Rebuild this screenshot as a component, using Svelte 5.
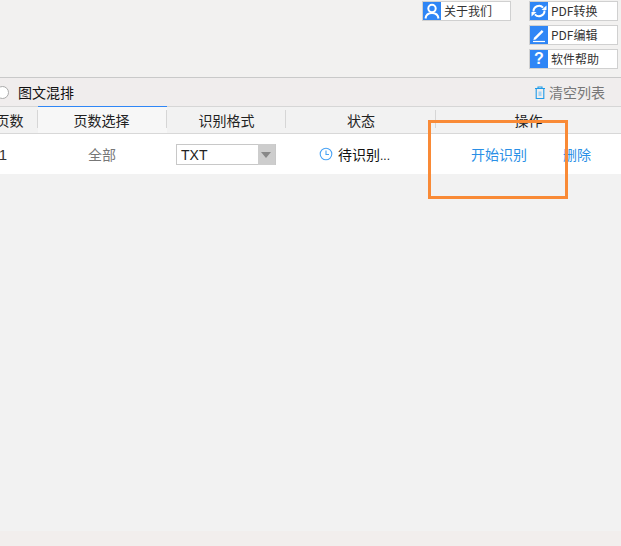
<script lang="ts">
  const sideLinks = ['PDF转换', 'PDF编辑', '软件帮助'];
</script>

<div class="page">
  <header class="top">
    <button class="tool">
      <span class="tool-icon">
        <svg viewBox="0 0 18 18" width="18" height="18" fill="none" stroke="#fff" stroke-width="2">
          <circle cx="9" cy="6.500" r="3.700" />
          <path d="M2.500 16.500c.5-3.800 3-5.500 6.500-5.500s6 1.700 6.500 5.500" />
        </svg>
      </span>
      <span>关于我们</span>
    </button>
    <div class="tool-col">
      {#each sideLinks as label, i}
        <button class="tool">
          <span class="tool-icon">
            {#if i === 0}
              <svg viewBox="0 0 18 18" width="18" height="18" fill="none" stroke="#fff" stroke-width="2">
                <path d="M3.500 9.500a5.500 5.500 0 0 1 9.600-3.800" />
                <path d="M14.500 8.500a5.500 5.500 0 0 1-9.600 3.800" />
                <path d="M11.500 8h5V3.500z" fill="#fff" stroke="none" />
                <path d="M6.500 10h-5v4.500z" fill="#fff" stroke="none" />
              </svg>
            {:else if i === 1}
              <svg viewBox="0 0 18 18" width="18" height="18" fill="none" stroke="#fff">
                <path d="M4 11.800l7.800-7.800 1.700 1.700-7.800 7.800-2.300.6z" fill="#fff" stroke="none" />
                <path d="M3 15.500h12" stroke-width="1.200" />
              </svg>
            {:else}
              <span class="help">?</span>
            {/if}
          </span>
          <span>{label}</span>
        </button>
      {/each}
    </div>
  </header>

  <div class="toolbar">
    <label class="mix">
      <span class="radio"></span>
      <span>图文混排</span>
    </label>
    <button class="clear">
      <svg viewBox="0 0 10 13" width="10" height="13" fill="none" stroke="#1f9be8" stroke-width="1.100">
        <path d="M0 2.500h10M3 2.500V1h4v1.500" />
        <path d="M1.200 2.500v10h7.600v-10" />
        <path d="M3.500 5.500h3v4.500h-3z" fill="#9fd3f5" stroke="none" />
      </svg>
      <span>清空列表</span>
    </button>
  </div>

  <div class="table-head">
    <div class="th">页数</div>
    <div class="th active">页数选择</div>
    <div class="th">识别格式</div>
    <div class="th">状态</div>
    <div class="th last">操作</div>
  </div>

  <div class="table-row">
    <div class="td num">1</div>
    <div class="td pages">全部</div>
    <div class="td">
      <div class="select">
        <span class="select-value">TXT</span>
        <span class="select-arrow"></span>
      </div>
    </div>
    <div class="td status">
      <svg viewBox="0 0 14 14" width="14" height="14" fill="none" stroke="#4aa3f5" stroke-width="1.100">
        <circle cx="7" cy="7" r="5.800" />
        <path d="M7 3.500V7.500H10" />
      </svg>
      <span>待识别<span class="dots">...</span></span>
    </div>
    <div class="td actions">
      <a href="#start">开始识别</a>
      <a href="#delete">删除</a>
    </div>
  </div>

  <div class="fill"></div>
  <div class="footer"></div>

  <div class="highlight"></div>
</div>

<style>
  :global(body) {
    margin: 0;
  }

  .page {
    position: relative;
    width: 621px;
    height: 546px;
    overflow: hidden;
    display: flex;
    flex-direction: column;
    background: #f2f2f2;
    font-family: "Noto Sans CJK SC", "Liberation Sans", sans-serif;
    color: #222;
  }

  .top {
    height: 78px;
    box-sizing: border-box;
    flex-shrink: 0;
    display: flex;
    justify-content: flex-end;
    align-items: flex-start;
    gap: 18px;
    padding: 1px 3px 0 0;
    background: #f2f1f0;
    border-bottom: 1px solid #c9c9c9;
  }

  .tool-col {
    display: flex;
    flex-direction: column;
    gap: 4px;
  }

  .tool {
    width: 89px;
    height: 20px;
    box-sizing: border-box;
    display: flex;
    align-items: center;
    gap: 3px;
    padding: 0;
    background: #fff;
    border: 1px solid #d0d0d0;
    font: inherit;
    font-size: 12px;
    line-height: 18px;
    color: #333;
  }

  .tool-icon {
    width: 18px;
    height: 18px;
    flex-shrink: 0;
    display: flex;
    align-items: center;
    justify-content: center;
    background: #2f86f6;
  }

  .help {
    color: #fff;
    font-family: "Liberation Sans", sans-serif;
    font-size: 16px;
    font-weight: 700;
  }

  .toolbar {
    height: 28px;
    flex-shrink: 0;
    display: flex;
    align-items: center;
    justify-content: space-between;
    padding: 0 16px 0 0;
    background: #f0eded;
    font-size: 14px;
  }

  .mix {
    display: flex;
    align-items: center;
    gap: 9px;
    margin-left: -4px;
    color: #111;
  }

  .radio {
    width: 11px;
    height: 11px;
    border: 1px solid #aaa;
    border-radius: 50%;
    background: #fff;
  }

  .clear {
    display: flex;
    align-items: center;
    gap: 4px;
    padding: 0;
    border: 0;
    background: none;
    font: inherit;
    font-size: 14px;
    color: #777;
  }

  .table-head,
  .table-row {
    display: grid;
    grid-template-columns: 57px 129px 119px 150px 185px;
    margin-left: -19px;
    flex-shrink: 0;
  }

  .table-head {
    height: 28px;
    box-sizing: border-box;
    border-top: 1px solid #d6d6d6;
    border-bottom: 1px solid #d8d8d8;
    background: #f2f2f2;
  }

  .th {
    display: flex;
    align-items: center;
    justify-content: center;
    position: relative;
    padding-bottom: 1px;
    font-size: 14px;
    color: #222;
  }

  .th::after {
    content: "";
    position: absolute;
    right: 0;
    top: 3px;
    bottom: 5px;
    width: 1px;
    background: #d6d6d6;
  }

  .th.last::after {
    display: none;
  }

  .th.active {
    background: #f7f7f7;
    box-shadow: 0 -1px 0 #2f86f6;
    padding-right: 2px;
  }

  .table-row {
    height: 40px;
    background: #fff;
    font-size: 14px;
  }

  .td {
    display: flex;
    align-items: center;
    justify-content: center;
  }

  .num {
    justify-content: flex-end;
    padding-right: 31px;
    font-family: "Liberation Sans", sans-serif;
    font-size: 15px;
    color: #333;
  }

  .pages {
    color: #777;
    padding-right: 1px;
  }

  .select {
    width: 100px;
    height: 21px;
    box-sizing: border-box;
    display: flex;
    align-items: center;
    justify-content: space-between;
    border: 1px solid #c8c8c8;
    background: #fff;
    margin: 0 0 0 -1px;
  }

  .select-value {
    padding: 1px 0 0 4px;
    font-family: "Liberation Sans", sans-serif;
    font-size: 14px;
    color: #222;
  }

  .select-arrow {
    width: 17px;
    height: 21px;
    background: #cdcdcd;
    position: relative;
  }

  .select-arrow::after {
    content: "";
    position: absolute;
    left: 3px;
    top: 8px;
    border-left: 5px solid transparent;
    border-right: 5px solid transparent;
    border-top: 6px solid #888;
  }

  .status {
    justify-content: flex-start;
    gap: 5px;
    padding-left: 33px;
    color: #111;
  }

  .dots {
    font-family: "Liberation Sans", sans-serif;
    font-size: 12px;
  }

  .actions {
    justify-content: flex-start;
    gap: 36px;
    padding-left: 35px;
  }

  .actions a {
    color: #2a8fe6;
    text-decoration: none;
  }

  .fill {
    flex: 1;
  }

  .footer {
    height: 15px;
    flex-shrink: 0;
    background: #f2eeed;
  }

  .highlight {
    position: absolute;
    left: 428px;
    top: 120px;
    width: 140px;
    height: 79px;
    box-sizing: border-box;
    border: 3px solid #f98a36;
  }
</style>
